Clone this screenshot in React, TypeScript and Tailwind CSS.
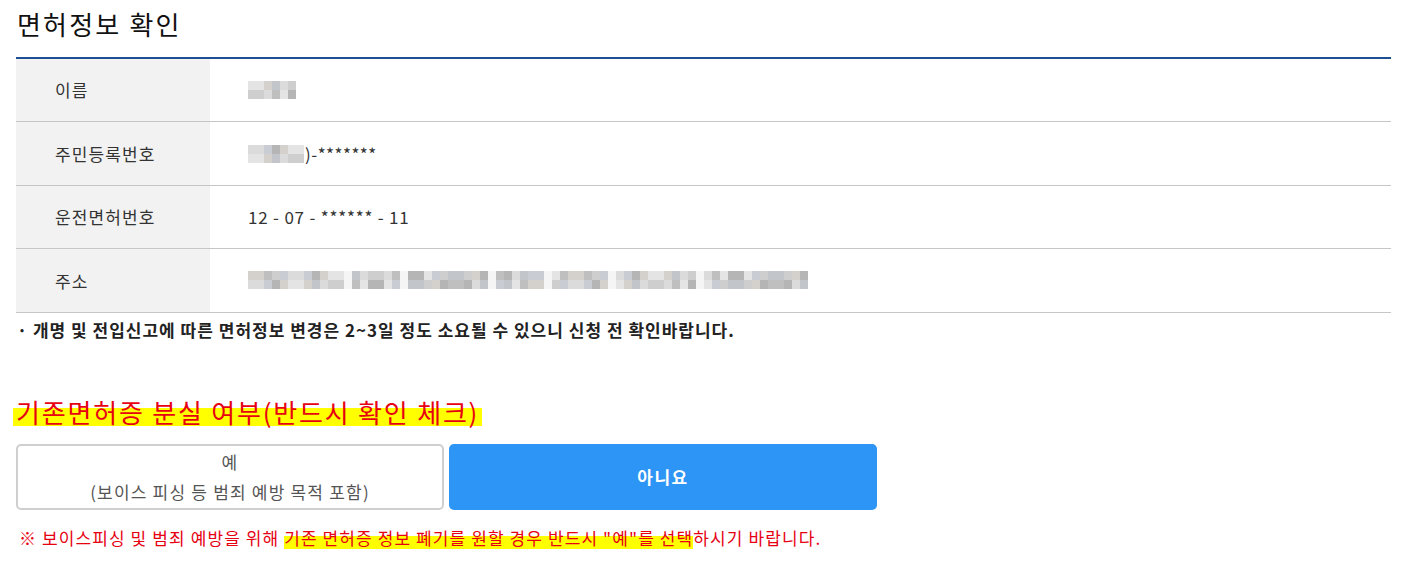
import React from "react"

const font = "font-['Noto_Sans_CJK_KR','Noto_Sans',sans-serif]"

// pixelated blur cells (class names written in full)
const shades = [
    "bg-[#c9c9c9]",
    "bg-[#b9b9b9]",
    "bg-[#d8d8d8]",
    "bg-[#aeaeae]",
    "bg-[#c4c8cf]",
    "bg-[#e2e2e2]",
    "bg-[#bcbfc4]",
    "bg-[#d0cdc8]",
]

function Mosaic({ cols, seed, gaps = [] }: { cols: number; seed: number; gaps?: number[] }) {
    const rows = [0, 1]
    return (
        <div className="flex flex-col opacity-90">
            {rows.map(r => (
                <div key={r} className="flex">
                    {Array.from({ length: cols }).map((_, c) => {
                        const gap = gaps.includes(c)
                        const idx = (c * 7 + r * 3 + seed * 5 + ((c * c) % 5)) % shades.length
                        return <div key={c} className={`w-[8px] h-[9px] ${gap ? "bg-[#f4f4f4]" : shades[idx]}`} />
                    })}
                </div>
            ))}
        </div>
    )
}

function Row({ label, children }: { label: string; children: React.ReactNode }) {
    return (
        <div className="flex h-[63.4px] border-b border-[#c6c6c6]">
            <div className="w-[194px] bg-[#f2f2f2] flex items-center pl-[39px] text-[17px] tracking-[1.1px] text-[#333]">{label}</div>
            <div className="flex-1 flex items-center pl-[38px] text-[17px] text-[#333]">{children}</div>
        </div>
    )
}

export default function App() {
    return (
        <div className={`${font} bg-white w-[1411px] h-[563px] pl-4 pr-5 overflow-hidden`}>
            {/* title */}
            <h2 className="pt-[6px] pl-px text-[26px] leading-[36px] tracking-[2.2px] text-[#111] mb-[15px]">면허정보 확인</h2>

            {/* info table */}
            <div className="border-t-2 border-[#1d4f95]">
                <Row label="이름">
                    <Mosaic cols={6} seed={1} />
                </Row>
                <Row label="주민등록번호">
                    <Mosaic cols={7} seed={2} />
                    <span className="ml-px tracking-[0.5px]">)-*******</span>
                </Row>
                <Row label="운전면허번호">
                    <span className="tracking-[0.8px]">12 - 07 - ****** - 11</span>
                </Row>
                <Row label="주소">
                    <Mosaic cols={70} seed={3} gaps={[12, 19, 30, 37, 45, 56]} />
                </Row>
            </div>
            <p className="mt-[7px] pl-px text-[17px] leading-[20px] tracking-[1px] font-bold text-[#222]">
                · 개명 및 전입신고에 따른 면허정보 변경은 2~3일 정도 소요될 수 있으니 신청 전 확인바랍니다.
            </p>

            {/* lost license */}
            <h3 className="mt-[54px] text-[26px] leading-[36px] tracking-[1.8px] text-[#e60012]">
                <span className="px-[3px] -ml-[3px] bg-[linear-gradient(transparent_40%,#ffff00_40%,#ffff00_88%,transparent_88%)]">
                    기존면허증 분실 여부(반드시 확인 체크)
                </span>
            </h3>
            <div className="mt-[14px] flex gap-[5px]">
                <button className="w-[428px] h-[66px] border-2 border-[#cfcfcf] rounded-[5px] bg-white text-[#555] text-[17px] leading-[30px] tracking-[1.2px] flex flex-col items-center justify-center">
                    <span>예</span>
                    <span>(보이스 피싱 등 범죄 예방 목적 포함)</span>
                </button>
                <button className="w-[428px] h-[66px] rounded-[5px] bg-[#2d95f5] text-white text-[17px] tracking-[1.5px] font-bold flex items-center justify-center">
                    아니요
                </button>
            </div>
            <p className="mt-[18px] pl-[3px] text-[17px] leading-[20px] tracking-[1.1px] text-[#e60012]">
                ※ 보이스피싱 및 범죄 예방을 위해{" "}
                <span className="bg-[linear-gradient(transparent_45%,#ffff00_45%,#ffff00_95%,transparent_95%)]">
                    기존 면허증 정보 폐기를 원할 경우 반드시 "예"를 선택
                </span>
                하시기 바랍니다.
            </p>
        </div>
    )
}
